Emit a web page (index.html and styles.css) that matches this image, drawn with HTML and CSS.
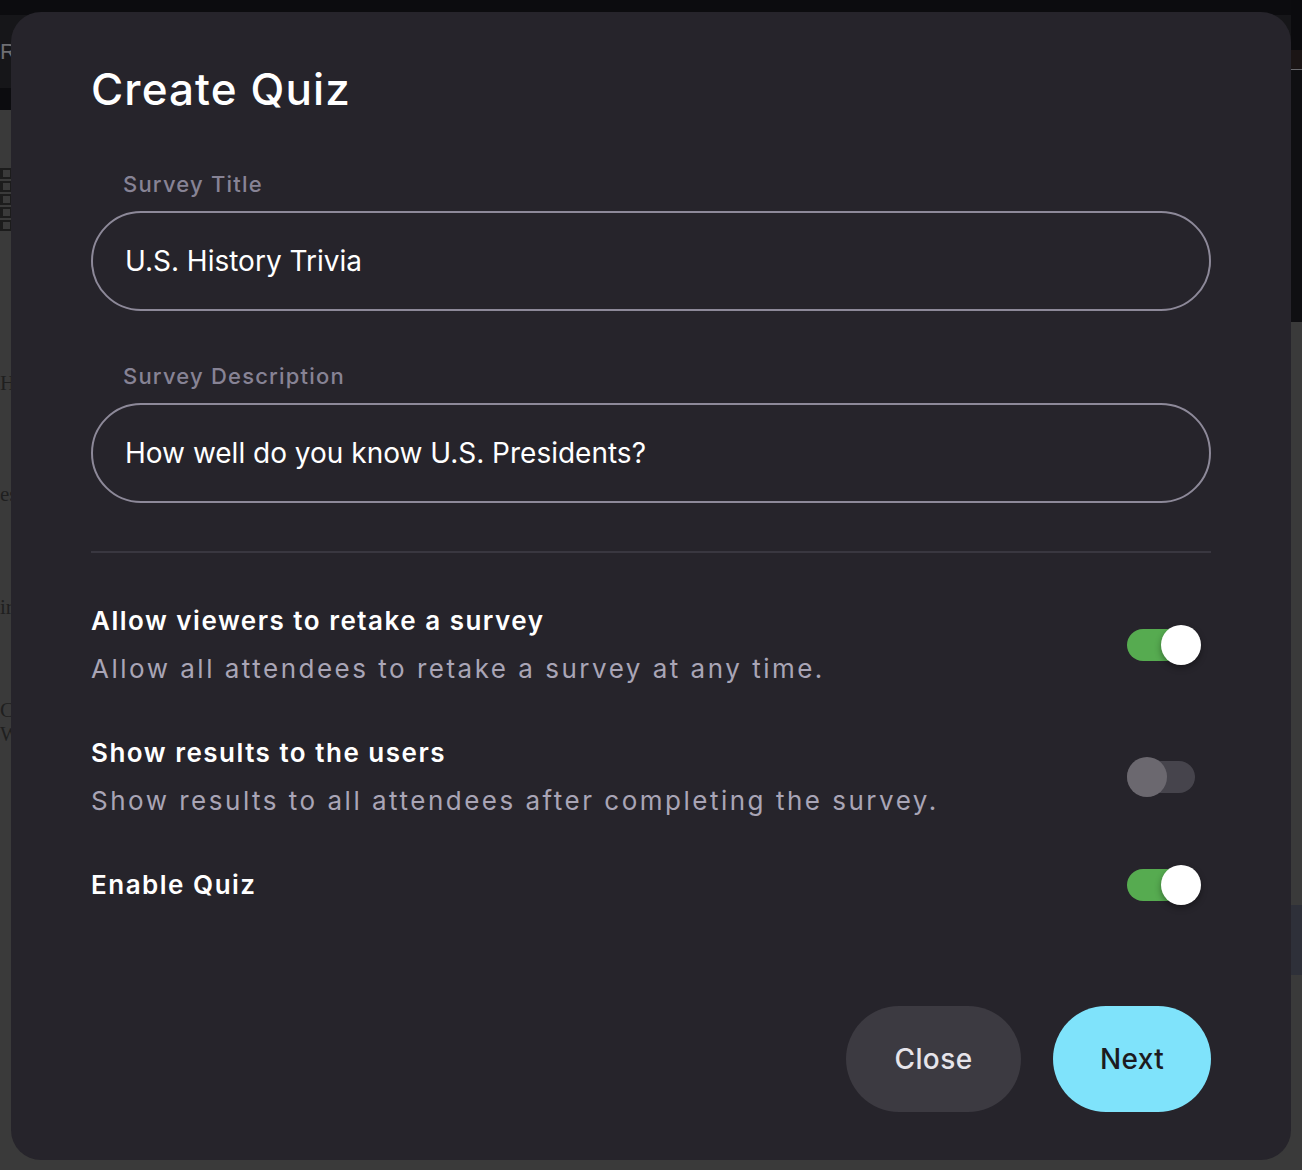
FILE: index.html
```html
<!DOCTYPE html>
<html lang="en">
<head>
<meta charset="utf-8">
<title>Create Quiz</title>
<link rel="stylesheet" href="styles.css">
</head>
<body>
<div class="backdrop">
  <div class="page-main">
    <div class="hdr"><div class="hdr-band"><span class="hdr-letter">R</span></div></div>
    <div class="page-body">
      <div class="grid-icon">
        <span></span><span></span><span></span><span></span><span></span>
      </div>
      <ul class="side-list">
        <li class="i1">H</li>
        <li class="i2">es</li>
        <li class="i3">ir</li>
        <li class="i4">Co<br>Wi</li>
      </ul>
    </div>
  </div>
  <div class="page-side">
    <div class="side-top"></div>
    <div class="side-brown"></div>
    <div class="side-dark"></div>
    <div class="side-gray"></div>
    <div class="side-blue"></div>
    <div class="side-gray2"></div>
  </div>
</div>

<div class="modal" role="dialog" aria-labelledby="modal-title">
  <h1 class="modal-title" id="modal-title">Create Quiz</h1>

  <div class="field">
    <label class="field-label">Survey Title</label>
    <div class="field-input">U.S. History Trivia</div>
  </div>

  <div class="field field-second">
    <label class="field-label">Survey Description</label>
    <div class="field-input">How well do you know U.S. Presidents?</div>
  </div>

  <hr class="divider">

  <div class="settings">
    <div class="setting">
      <div class="setting-text">
        <div class="setting-title">Allow viewers to retake a survey</div>
        <div class="setting-desc">Allow all attendees to retake a survey at any time.</div>
      </div>
      <div class="toggle on"><span class="knob"></span></div>
    </div>
    <div class="setting">
      <div class="setting-text">
        <div class="setting-title">Show results to the users</div>
        <div class="setting-desc">Show results to all attendees after completing the survey.</div>
      </div>
      <div class="toggle"><span class="knob"></span></div>
    </div>
    <div class="setting">
      <div class="setting-text">
        <div class="setting-title">Enable Quiz</div>
      </div>
      <div class="toggle on"><span class="knob"></span></div>
    </div>
  </div>

  <div class="actions">
    <button class="btn btn-close">Close</button>
    <button class="btn btn-next">Next</button>
  </div>
</div>
</body>
</html>
```

FILE: styles.css
```css
* { box-sizing: border-box; }
html, body { margin: 0; padding: 0; }
body {
  width: 1302px;
  height: 1170px;
  overflow: hidden;
  background: #3a3a3a;
  font-family: Inter, "Noto Sans", sans-serif;
}

/* background page */
.backdrop { display: flex; width: 1302px; height: 1170px; }
.page-main { flex: 1; display: flex; flex-direction: column; }
.hdr { height: 110px; background: #0c0c0f; padding-top: 15px; }
.hdr-band { height: 73px; background: #161619; }
.hdr-letter {
  display: block;
  font-family: "Liberation Sans", sans-serif;
  font-size: 22px;
  color: #6e6e72;
  line-height: 73px;
}
.page-body { flex: 1; background: #3a3a3a; padding-top: 58px; }
.grid-icon {
  width: 14px;
  display: flex;
  flex-direction: column;
  gap: 2px;
  border-right: 2px solid #1c1c1c;
}
.grid-icon span {
  display: block;
  width: 12px;
  height: 11px;
  border: 2px solid #1c1c1c;
  border-left-width: 3px;
}
.side-list {
  list-style: none; margin: 0; padding: 0;
  font-family: "Liberation Serif", serif;
  font-size: 21px; color: #1f1f1f;
}
.side-list .i1 { margin-top: 140px; }
.side-list .i2 { margin-top: 86px; }
.side-list .i3 { margin-top: 88px; }
.side-list .i4 { margin-top: 78px; line-height: 24px; }

.page-side { width: 11px; display: flex; flex-direction: column; }
.side-top { height: 50px; background: #0b0b0e; }
.side-brown { height: 20px; background: #1b1515; border-bottom: 1px solid #6a6a6e; }
.side-dark { height: 252px; background: #0f0f12; }
.side-gray { height: 583px; background: #3a3a3a; }
.side-blue { height: 70px; background: #2e3039; }
.side-gray2 { flex: 1; background: #3a3a3a; }

/* modal */
.modal {
  position: fixed;
  left: 11px;
  top: 12px;
  width: 1280px;
  height: 1148px;
  background: #26242b;
  border-radius: 30px;
  padding: 49px 80px 48px 80px;
  display: flex;
  flex-direction: column;
  color: #ffffff;
}
.modal-title {
  margin: 0;
  font-size: 44px;
  line-height: 56px;
  font-weight: 500;
  letter-spacing: 1.1px;
  color: #ffffff;
}

.field { margin-top: 52px; display: flex; flex-direction: column; }
.field-second { margin-top: 50px; }
.field-label {
  padding-left: 32px;
  font-size: 22px;
  line-height: 30px;
  font-weight: 500;
  color: #878395;
  letter-spacing: 1.2px;
}
.field-input {
  margin-top: 12px;
  height: 100px;
  border: 2px solid #8d8999;
  border-radius: 50px;
  padding-left: 32px;
  display: flex;
  align-items: center;
  font-size: 28px;
  color: #ffffff;
  letter-spacing: 0px;
}

.divider {
  margin: 48px 0 0 0;
  height: 2px;
  border: 0;
  background: #393740;
}

.settings { margin-top: 44px; display: flex; flex-direction: column; gap: 36px; }
.setting { display: flex; align-items: center; justify-content: space-between; }
.setting-text { display: flex; flex-direction: column; }
.setting-title {
  font-size: 26px;
  line-height: 48px;
  font-weight: 600;
  color: #ffffff;
  letter-spacing: 1.5px;
}
.setting-desc {
  font-size: 26px;
  line-height: 48px;
  font-weight: 400;
  color: #a9a5b6;
  letter-spacing: 2.5px;
}

.toggle {
  position: relative;
  width: 74px;
  height: 40px;
  margin-right: 10px;
  flex: none;
}
.toggle::before {
  content: "";
  position: absolute;
  left: 0; top: 4px;
  width: 68px; height: 32px;
  border-radius: 16px;
  background: #46444c;
}
.toggle.on::before { background: #56ab50; }
.knob {
  position: absolute;
  left: 0; top: 0;
  width: 40px; height: 40px;
  border-radius: 50%;
  background: #6b686f;
}
.toggle.on .knob {
  left: 34px;
  background: #ffffff;
  box-shadow: 0 3px 6px rgba(0, 0, 0, 0.35);
}

.actions {
  margin-top: auto;
  display: flex;
  justify-content: flex-end;
  gap: 32px;
}
.btn {
  height: 106px;
  border: 0;
  border-radius: 53px;
  font-family: Inter, "Noto Sans", sans-serif;
  font-size: 28px;
  font-weight: 500;
  letter-spacing: 0.4px;
  cursor: pointer;
}
.btn-close { width: 175px; background: #3c3a41; color: #e6e4ea; }
.btn-next { width: 158px; background: #7fe3fb; color: #1c1b20; }
```
